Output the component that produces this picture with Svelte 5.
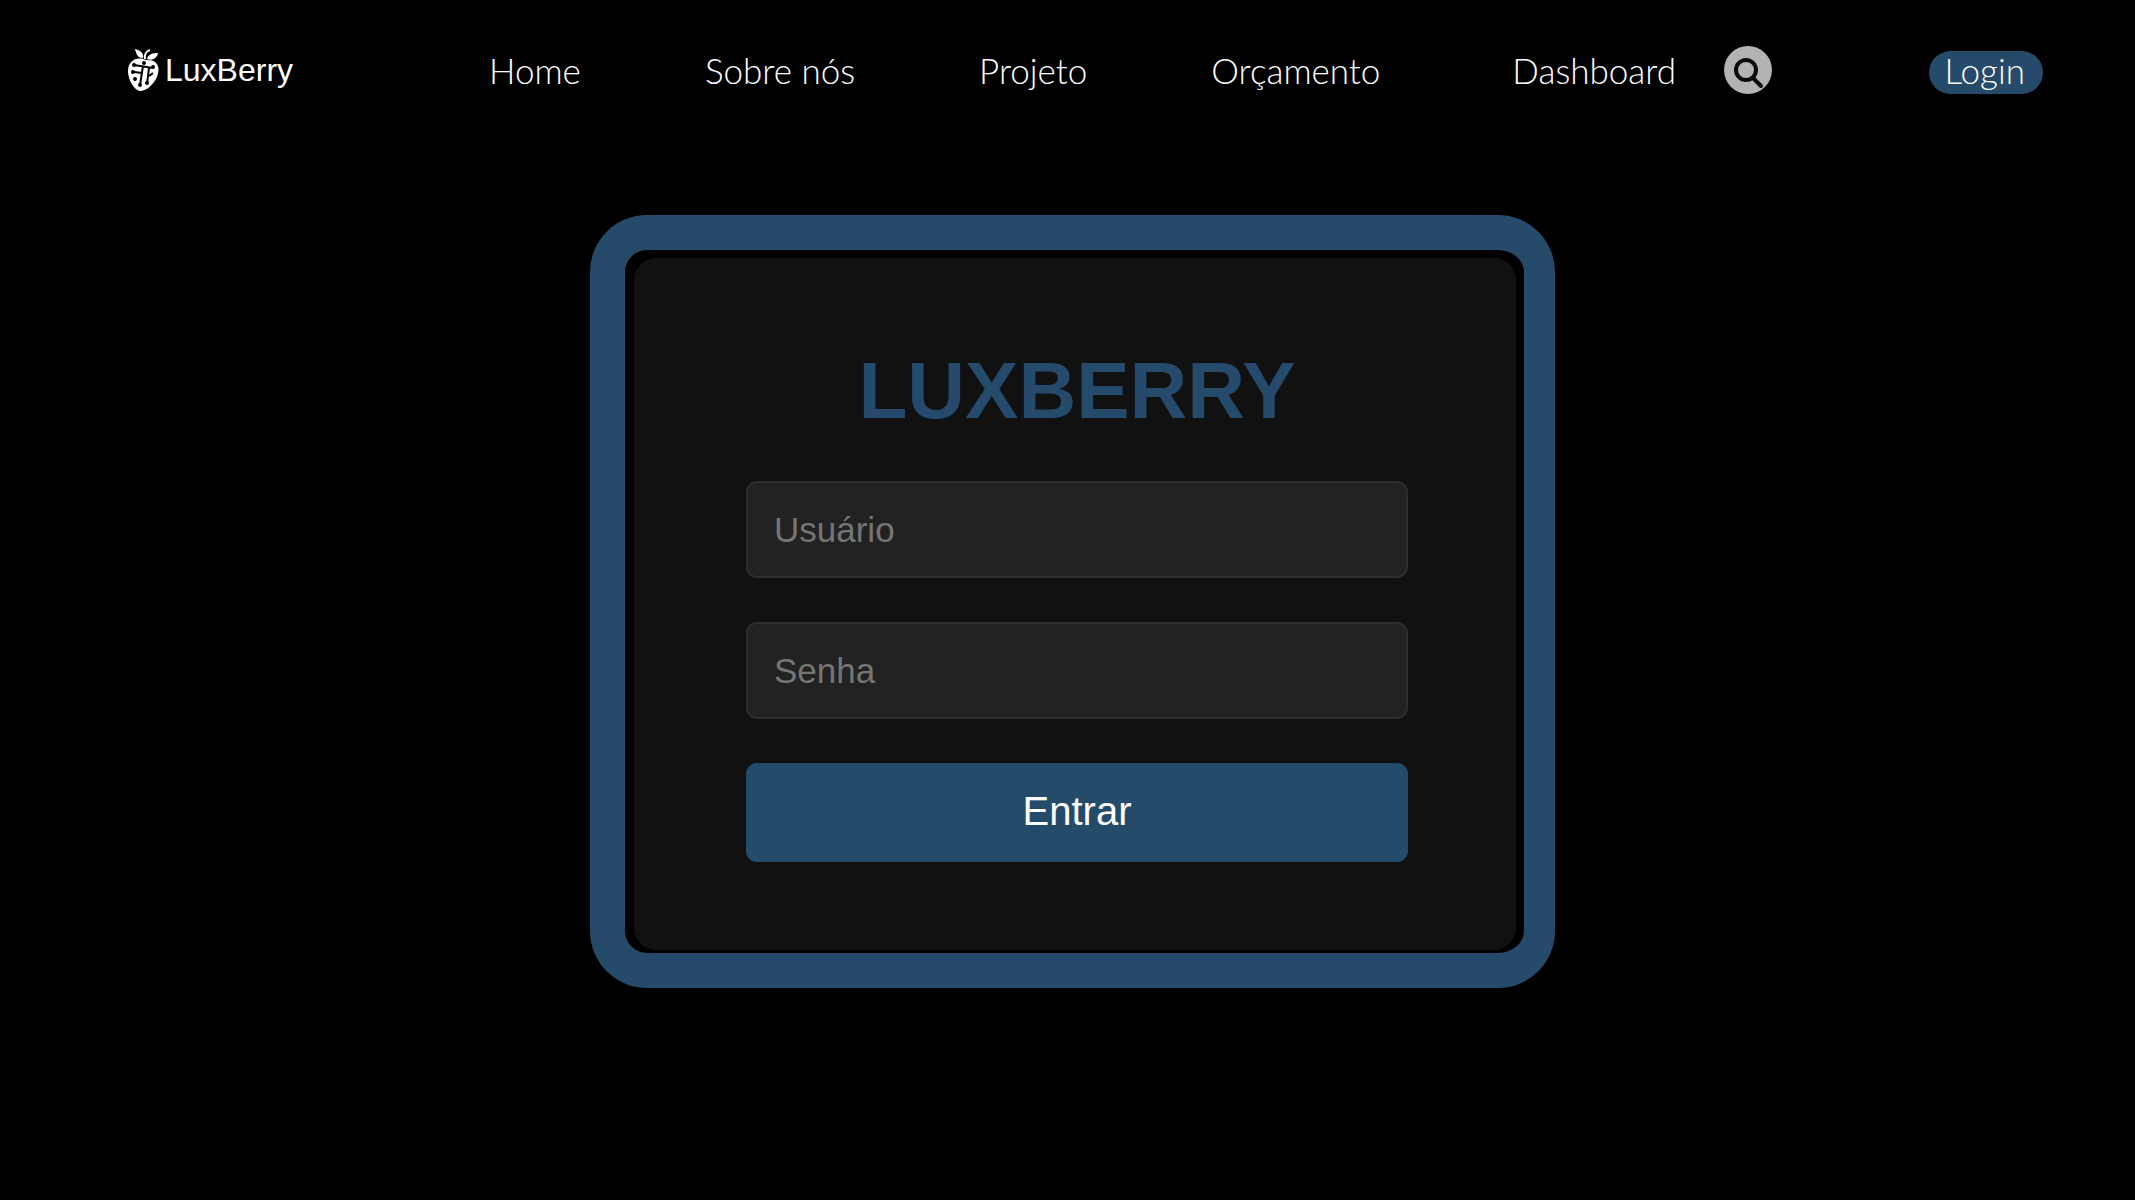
<script>
  const links = [
    { label: 'Home', href: '#home' },
    { label: 'Sobre nós', href: '#sobre' },
    { label: 'Projeto', href: '#projeto' },
    { label: 'Orçamento', href: '#orcamento' }
  ];

  let user = $state('');
  let password = $state('');

  function submit(event) {
    event.preventDefault();
  }
</script>

<header class="topbar">
  <a class="brand" href="#home">
    <svg class="berry" viewBox="0 0 34 44" aria-hidden="true">
      <path class="fill" d="M16 10C10 10 9 5 8 1C13 2 17 5 16 10Z" />
      <path class="fill" d="M20 11C21 6 26 5 31 5C30 10 26 13 20 11Z" />
      <path class="stem" d="M18 11C17 7 19 3 23 2" />
      <path class="fill" d="M16 11C20 13 24 11 28 14C33 18 32 25 29 31C25 38 19 43 13 43C7 42 1 32 1 23C1 14 8 9 16 11Z" />
      <path class="trace" d="M7 17L26 20M16 18L13 37M7 24L15 25M22 20L20 36M22 28L26 25" />
      <g class="node">
        <circle cx="7" cy="17" r="2" />
        <circle cx="26" cy="19" r="2" />
        <circle cx="17" cy="15" r="2" />
        <circle cx="6" cy="24" r="2" />
        <circle cx="8" cy="31" r="2" />
        <circle cx="13" cy="37" r="2" />
        <circle cx="20" cy="35" r="2" />
      </g>
    </svg>
    <span>LuxBerry</span>
  </a>

  <nav class="links" aria-label="Principal">
    {#each links as link}
      <a href={link.href}>{link.label}</a>
    {/each}
  </nav>

  <div class="tools">
    <a href="#dashboard">Dashboard</a>
    <button class="search" type="button" aria-label="Buscar">
      <svg viewBox="0 0 48 48" aria-hidden="true">
        <circle cx="22" cy="24" r="10" />
        <path d="M29 32L37 40" />
      </svg>
    </button>
  </div>

  <a class="login" href="#login">Login</a>
</header>

<main>
  <section class="frame">
    <form class="panel" onsubmit={submit}>
      <h1>LUXBERRY</h1>
      <input type="text" placeholder="Usuário" aria-label="Usuário" bind:value={user} />
      <input type="password" placeholder="Senha" aria-label="Senha" bind:value={password} />
      <button type="submit">Entrar</button>
    </form>
  </section>
</main>

<style>
  :global(body) {
    margin: 0;
    background: #000;
    color: #fff;
    font-family: Lato, 'Liberation Sans', sans-serif;
  }

  a {
    color: inherit;
    text-decoration: none;
  }

  .topbar {
    display: flex;
    align-items: center;
    padding: 46px 92px 0 127px;
    font-size: 35px;
    font-weight: 300;
    line-height: 48px;
    white-space: nowrap;
  }

  .brand {
    display: flex;
    align-items: center;
    gap: 4px;
    font-family: 'Liberation Sans', Arial, sans-serif;
    font-size: 32px;
    font-weight: 400;
  }

  .berry {
    width: 34px;
    height: 44px;
  }

  .berry .fill {
    fill: #fff;
  }

  .berry .stem {
    fill: none;
    stroke: #fff;
    stroke-width: 2;
  }

  .berry .trace {
    fill: none;
    stroke: #000;
    stroke-width: 2;
  }

  .berry .node {
    fill: #000;
  }

  .links {
    display: flex;
    gap: 124px;
    margin-left: 196px;
  }

  .tools {
    display: flex;
    align-items: center;
    gap: 48px;
    margin-left: 132px;
  }

  .search {
    width: 48px;
    height: 48px;
    padding: 0;
    border: 0;
    border-radius: 50%;
    background: #b3b3b3;
  }

  .search svg {
    display: block;
    fill: none;
    stroke: #0b0b0b;
    stroke-width: 4;
    stroke-linecap: round;
  }

  .login {
    margin-top: 4px;
    margin-left: auto;
    padding: 0 18px 4px 16px;
    border-radius: 22px;
    background: #264a6a;
    line-height: 39px;
  }

  main {
    display: flex;
    justify-content: center;
    padding: 121px 0 120px 10px;
  }

  .frame {
    box-sizing: border-box;
    width: 100%;
    max-width: 965px;
    padding: 8px 8px 3px 9px;
    border: 35px solid #264a6a;
    border-right-width: 31px;
    border-radius: 57px;
    background: #000;
  }

  .panel {
    display: flex;
    flex-direction: column;
    gap: 44px;
    padding: 86px 108px 88px 112px;
    border-radius: 22px;
    background: #111;
    font-family: 'Liberation Sans', Arial, sans-serif;
  }

  h1 {
    margin: 0;
    color: #254a6b;
    font-size: 80px;
    line-height: 93px;
    text-align: center;
  }

  input,
  .panel button {
    box-sizing: border-box;
    width: 100%;
    height: 97px;
    border-radius: 11px;
    font-family: inherit;
  }

  input {
    padding: 0 26px;
    border: 2px solid #2e2e2e;
    background: #222;
    color: #fff;
    font-size: 35px;
  }

  input::placeholder {
    color: #757575;
    opacity: 1;
  }

  .panel button {
    height: 99px;
    padding: 0 0 3px;
    border: 0;
    background: #254b6b;
    color: #fff;
    font-size: 40px;
  }
</style>
